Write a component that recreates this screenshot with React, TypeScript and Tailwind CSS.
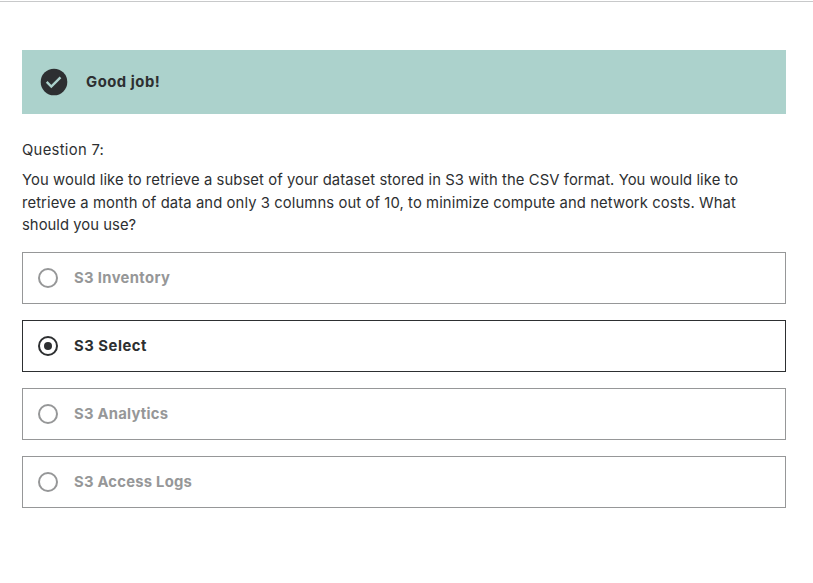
const options = [
  { label: 'S3 Inventory', tracking: 'tracking-[0.36px]', selected: false },
  { label: 'S3 Select', tracking: 'tracking-[0.54px]', selected: true },
  { label: 'S3 Analytics', tracking: 'tracking-[0.24px]', selected: false },
  { label: 'S3 Access Logs', tracking: 'tracking-[0.23px]', selected: false },
];

function Radio({ selected }: { selected: boolean }) {
  return (
    <span className={`flex size-5 items-center justify-center rounded-full border-2 ${selected ? 'border-[#2d2f31]' : 'border-[#969798]'}`}>
      {selected && <span className="size-2 rounded-full bg-[#2d2f31]" />}
    </span>
  );
}

export default function App() {
  return (
    <main className="h-[583px] bg-white pt-px font-['Inter','Liberation_Sans',sans-serif] text-[14.8px] leading-[22.4px] text-[#2d2f31]">
      <hr className="border-t border-[#c8c9ca]" />
      <section className="pt-12 pr-[27px] pl-[22px]">
        <div className="flex h-16 items-center gap-[18px] bg-[#acd2cc] pl-[18px]">
          <svg className="size-7" viewBox="0 0 28 28">
            <circle cx="14" cy="14" r="13.3" fill="#2d2f31" />
            <path d="m6.7 13.9 4.6 4.6 9.2-9.2" fill="none" stroke="#acd2cc" strokeWidth="2.4" />
          </svg>
          <p className="font-bold tracking-[0.53px]">Good job!</p>
        </div>
        <h2 className="mt-[25px] tracking-[0.3px]">Question 7:</h2>
        <div className="mt-2 whitespace-nowrap">
          <p className="tracking-[0.08px]">You would like to retrieve a subset of your dataset stored in S3 with the CSV format. You would like to</p>
          <p className="tracking-[0.1px]">retrieve a month of data and only 3 columns out of 10, to minimize compute and network costs. What</p>
          <p className="tracking-[0.04px]">should you use?</p>
        </div>
        <div className="mt-[15px] flex flex-col gap-4">
          {options.map((o) => (
            <label key={o.label} className={`flex h-[52px] items-center gap-4 border pl-[15px] ${o.selected ? 'border-[#2d2f31]' : 'border-[#969798] text-[#969798]'}`}>
              <Radio selected={o.selected} />
              <span className={`pt-px font-bold ${o.tracking}`}>{o.label}</span>
            </label>
          ))}
        </div>
      </section>
    </main>
  );
}
